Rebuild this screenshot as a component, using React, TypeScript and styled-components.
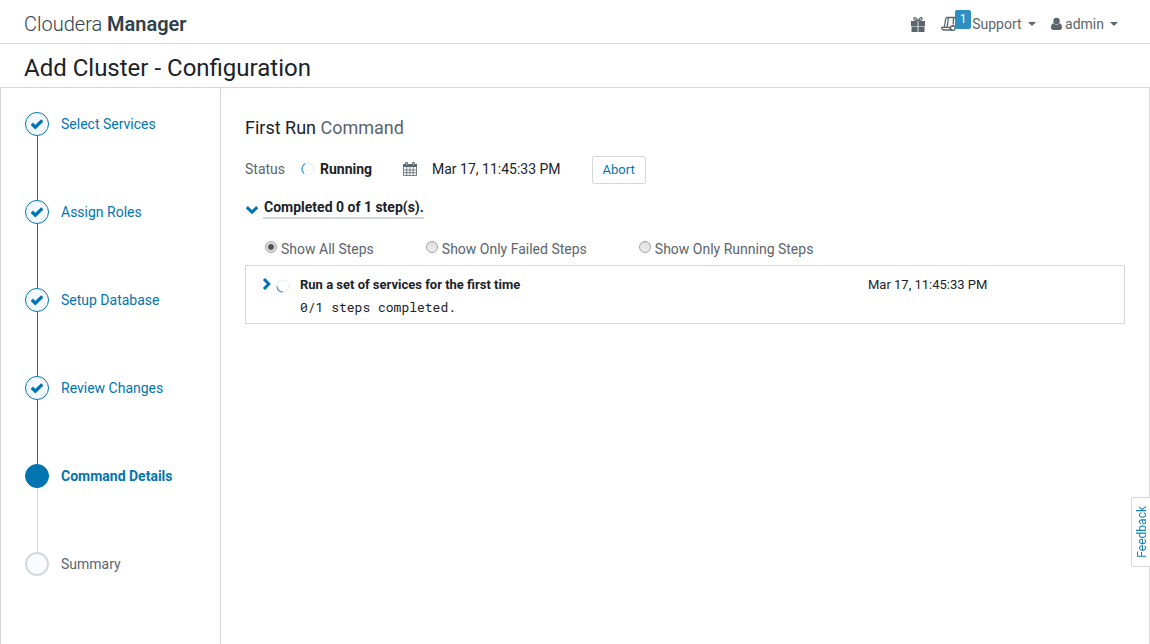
import React from "react";
import styled, { createGlobalStyle, css } from "styled-components";

const blue = "#0275b0";
const slate = "#5a656d";
const ink = "#1b2329";
const line = "#d6d8db";

const GlobalStyle = createGlobalStyle`
  * { box-sizing: border-box; }
  html, body, #root { height: 100%; }
  body {
    margin: 0;
    background: #fff;
    color: ${ink};
    font: 14px/20px Roboto, "Liberation Sans", sans-serif;
  }
  a { color: ${blue}; text-decoration: none; }
  h1, h2, ol { margin: 0; padding: 0; font-weight: 400; }
  button { font: inherit; cursor: pointer; }
`;

const Page = styled.div`
  min-height: 100%;
  display: flex;
  flex-direction: column;
`;

const TopBar = styled.header`
  display: flex;
  align-items: center;
  justify-content: space-between;
  height: 44px;
  padding: 4px 32px 0 24px;
  border-bottom: 1px solid ${line};
`;

const Brand = styled.a`
  font-size: 20px;
  line-height: 24px;
  font-weight: 300;
  color: #30404a;
  strong { font-weight: 600; }
`;

const Nav = styled.nav`
  display: flex;
  align-items: center;
  height: 32px;
`;

const NavButton = styled.button<{ $gap: number }>`
  display: flex;
  align-items: center;
  padding: 0;
  margin-left: ${(p) => p.$gap}px;
  border: 0;
  background: none;
  color: ${slate};
  position: relative;
`;

const Badge = styled.span`
  position: absolute;
  left: 14px;
  bottom: 3px;
  width: 16px;
  height: 19px;
  border-radius: 2px;
  background: #2e8fc4;
  color: #fff;
  font-size: 12px;
  line-height: 19px;
  text-align: center;
`;

const Caret = styled.span`
  margin-left: 6px;
  border: 4px solid transparent;
  border-top-color: currentColor;
  border-bottom: 0;
`;

const TitleBar = styled.h1`
  padding: 10px 24px 5px;
  font-size: 24px;
  line-height: 28px;
  border-bottom: 1px solid ${line};
`;

const Body = styled.div`
  flex: 1;
  display: flex;
  border: 1px solid ${line};
  border-width: 0 1px;
`;

const Sidebar = styled.aside`
  width: 220px;
  flex: none;
  padding: 24px;
  border-right: 1px solid ${line};
`;

const Steps = styled.ol`
  list-style: none;
`;

type StepState = "done" | "current" | "todo";

const Step = styled.li<{ $state: StepState }>`
  display: flex;
  flex-direction: column;
  color: ${(p) => (p.$state === "todo" ? slate : blue)};
  font-weight: ${(p) => (p.$state === "current" ? 700 : 400)};
  &:not(:last-child)::after {
    content: "";
    width: 1px;
    height: 64px;
    margin-left: 12px;
    background: ${(p) => (p.$state === "done" ? blue : line)};
  }
`;

const StepRow = styled.div`
  display: flex;
  align-items: center;
  gap: 12px;
  height: 24px;
`;

const Dot = styled.span<{ $state: StepState }>`
  display: flex;
  align-items: center;
  justify-content: center;
  width: 24px;
  height: 24px;
  border-radius: 50%;
  border: 1px solid ${blue};
  background: #f3f9fe;
  ${(p) => p.$state === "current" && css`background: ${blue};`}
  ${(p) => p.$state === "todo" && css`border: 2px solid ${line}; background: #f9fbfe;`}
`;

const Main = styled.main`
  flex: 1;
  min-width: 0;
  padding: 28px 24px;
`;

const Heading = styled.h2`
  font-size: 18px;
  line-height: 24px;
  span { color: ${slate}; }
`;

const StatusRow = styled.div`
  display: flex;
  align-items: flex-start;
  height: 28px;
  margin-top: 16px;
  line-height: 26px;
`;

const StatusLabel = styled.span`
  width: 56px;
  color: ${slate};
`;

const StatusValue = styled.span`
  display: flex;
  align-items: center;
  gap: 5px;
  width: 102px;
  font-weight: 700;
`;

const When = styled.span`
  display: flex;
  align-items: center;
  gap: 15px;
  margin-right: 31px;
`;

const AbortButton = styled.button`
  height: 28px;
  padding: 0 10px;
  font-size: 13px;
  color: ${blue};
  background: #fff;
  border: 1px solid ${line};
  border-radius: 2px;
`;

const Toggle = styled.button`
  display: flex;
  align-items: center;
  gap: 4px;
  margin-top: 13px;
  padding: 0;
  border: 0;
  background: none;
  color: ${blue};
  font-weight: 700;
  svg { margin-top: 4px; }
  span {
    padding-left: 1px;
    color: ${ink};
    border-bottom: 2px solid ${line};
  }
`;

const Filters = styled.div`
  display: flex;
  gap: 52px;
  margin: 20px 0 6px 20px;
`;

const Filter = styled.label`
  display: flex;
  gap: 4px;
  color: ${slate};
`;

const Radio = styled.input`
  appearance: none;
  width: 12px;
  height: 12px;
  margin: 2px 0 0;
  border: 1px solid #a5a5a5;
  border-radius: 50%;
  background: linear-gradient(#ddd, #eee);
  &:checked {
    background: radial-gradient(circle, #505050 0 2px, #e6e6e6 4px);
  }
`;

const StepPanel = styled.section`
  display: grid;
  grid-template-columns: 14px 24px 568fr 240fr;
  align-items: start;
  padding: 8px 16px 5px;
  border: 1px solid ${line};
  font-size: 13px;
  line-height: 22px;
`;

const Expand = styled.button`
  display: flex;
  align-items: center;
  height: 20px;
  padding: 0;
  border: 0;
  background: none;
  color: ${blue};
`;

const SpinnerCell = styled.span`
  display: flex;
  align-items: center;
  height: 24px;
`;

const StepText = styled.div`
  strong { display: block; font-weight: 700; }
  code { display: block; font: 13px/22px "Roboto Mono", "Liberation Mono", monospace; }
`;

const Feedback = styled.button`
  position: fixed;
  right: 0;
  top: 497px;
  width: 19px;
  height: 70px;
  padding: 0 0 0 2px;
  border: 1px solid ${line};
  border-right: 0;
  border-radius: 2px 0 0 2px;
  background: #fff;
  color: #1683bd;
  font-size: 12px;
  display: flex;
  align-items: center;
  justify-content: center;
  span {
    writing-mode: vertical-rl;
    rotate: 180deg;
  }
`;

const GiftIcon = () => (
  <svg width="16" height="16" viewBox="0 0 16 16" fill="currentColor" aria-hidden="true">
    <path d="M1 5h6.600v5H1zM8.400 5H15v5H8.400zM1.500 10.600h6.100V16H1.500zM8.400 10.600h6.100V16H8.400z" />
    <path d="M7.700 4.800C6.500 1.600 4.300 .7 3.900 2.400 3.600 3.900 5 4.500 7.700 4.700M8.300 4.800C9.500 1.600 11.700 .7 12.100 2.400 12.400 3.900 11 4.500 8.300 4.700" fill="none" stroke="currentColor" strokeWidth="1.200" />
  </svg>
);

const ScrollIcon = () => (
  <svg width="16" height="16" viewBox="0 0 16 16" fill="none" stroke="currentColor" strokeWidth="1.300" aria-hidden="true">
    <path d="M5.500 1.500H14M5.500 1.500C3.500 3 5 7 3 11M7.500 2C6.500 4 7.500 7 6 11M13 2c-1.500 2 0 4-1 6.500M.7 11.300h8.300c0 2 1 2.700 2 2.700H3C1.500 14 .7 13 .7 11.300z" />
    <circle cx="11.800" cy="12" r="2.400" />
    <path d="M11.800 9v2M9.500 14.500l1.500-1.500" />
  </svg>
);

const UserIcon = () => (
  <svg width="11" height="14" viewBox="0 0 10 14" preserveAspectRatio="none" fill="currentColor" aria-hidden="true">
    <ellipse cx="5" cy="4" rx="2.900" ry="3.300" />
    <path d="M2.300 6.300C.5 6.800 0 8.500 0 10.800 0 12 .8 13 2 13h6c1.200 0 2-1 2-2.200 0-2.300-.5-4-2.300-4.500C6.300 8.200 3.700 8.200 2.300 6.300z" />
  </svg>
);

const CalendarIcon = () => (
  <svg width="14" height="14" viewBox="0 0 14 14" fill="none" stroke={slate} aria-hidden="true">
    <path d="M.5 2.500h13v11H.5zM3.700 5v8.500M6.900 5v8.500M10.200 5v8.500M.5 8h13M.5 10.700h13" strokeWidth=".8" />
    <path d="M0 2h14v3H0z" fill={slate} stroke="none" />
    <path d="M3.500 0v3.500M10.500 0v3.500" strokeWidth="2.400" />
    <path d="M3.500 .8v2.400M10.500 .8v2.400" stroke="#c8ccd0" strokeWidth=".7" />
  </svg>
);

const CheckIcon = () => (
  <svg width="14" height="12" viewBox="0 0 14 12" fill="none" stroke={blue} strokeWidth="3.300" aria-hidden="true">
    <path d="M1.800 5.700l3.600 3.500L12.300 2.400" />
  </svg>
);

const Chevron = ({ down }: { down?: boolean }) =>
  down ? (
    <svg width="14" height="10" viewBox="0 0 14 10" fill="none" stroke="currentColor" strokeWidth="3" aria-hidden="true">
      <path d="M1.800 2.200l5.200 5 5.200-5" />
    </svg>
  ) : (
    <svg width="10" height="14" viewBox="0 0 10 14" fill="none" stroke="currentColor" strokeWidth="3" aria-hidden="true">
      <path d="M2 2l4.800 5L2 12" />
    </svg>
  );

const Spinner = ({ low }: { low?: boolean }) => (
  <svg width="14" height="14" viewBox="0 0 14 14" fill="none" aria-hidden="true">
    <circle cx="7" cy="7" r="6" stroke="#e9ebed" />
    <path d={low ? "M1 7.500A6 6 0 0 0 6.500 13" : "M4 1.800A6 6 0 0 0 3 11.500"} stroke="#3b97cb" strokeWidth="1.300" />
  </svg>
);

const wizardSteps: { label: string; state: StepState }[] = [
  { label: "Select Services", state: "done" },
  { label: "Assign Roles", state: "done" },
  { label: "Setup Database", state: "done" },
  { label: "Review Changes", state: "done" },
  { label: "Command Details", state: "current" },
  { label: "Summary", state: "todo" },
];

const filters = ["Show All Steps", "Show Only Failed Steps", "Show Only Running Steps"];

export default function App() {
  return (
    <Page>
      <GlobalStyle />
      <TopBar>
        <Brand href="#">
          Cloudera <strong>Manager</strong>
        </Brand>
        <Nav>
          <NavButton $gap={0} aria-label="What's new">
            <GiftIcon />
          </NavButton>
          <NavButton $gap={15} aria-label="Running commands">
            <ScrollIcon />
            <Badge>1</Badge>
          </NavButton>
          <NavButton $gap={15}>
            Support <Caret />
          </NavButton>
          <NavButton $gap={15}>
            <UserIcon />
            &nbsp;admin <Caret />
          </NavButton>
        </Nav>
      </TopBar>
      <TitleBar>Add Cluster - Configuration</TitleBar>
      <Body>
        <Sidebar>
          <Steps>
            {wizardSteps.map(({ label, state }) => (
              <Step key={label} $state={state}>
                <StepRow>
                  <Dot $state={state}>{state === "done" && <CheckIcon />}</Dot>
                  {state === "done" ? <a href="#">{label}</a> : <span>{label}</span>}
                </StepRow>
              </Step>
            ))}
          </Steps>
        </Sidebar>
        <Main>
          <Heading>
            First Run <span>Command</span>
          </Heading>
          <StatusRow>
            <StatusLabel>Status</StatusLabel>
            <StatusValue>
              <Spinner />
              Running
            </StatusValue>
            <When>
              <CalendarIcon />
              Mar 17, 11:45:33 PM
            </When>
            <AbortButton>Abort</AbortButton>
          </StatusRow>
          <Toggle aria-expanded="true">
            <Chevron down />
            <span>Completed 0 of 1 step(s).</span>
          </Toggle>
          <Filters>
            {filters.map((label, i) => (
              <Filter key={label}>
                <Radio type="radio" name="filter" defaultChecked={i === 0} />
                {label}
              </Filter>
            ))}
          </Filters>
          <StepPanel>
            <Expand aria-label="Expand step">
              <Chevron />
            </Expand>
            <SpinnerCell>
              <Spinner low />
            </SpinnerCell>
            <StepText>
              <strong>Run a set of services for the first time</strong>
              <code>0/1 steps completed.</code>
            </StepText>
            <time>Mar 17, 11:45:33 PM</time>
          </StepPanel>
        </Main>
      </Body>
      <Feedback>
        <span>Feedback</span>
      </Feedback>
    </Page>
  );
}
